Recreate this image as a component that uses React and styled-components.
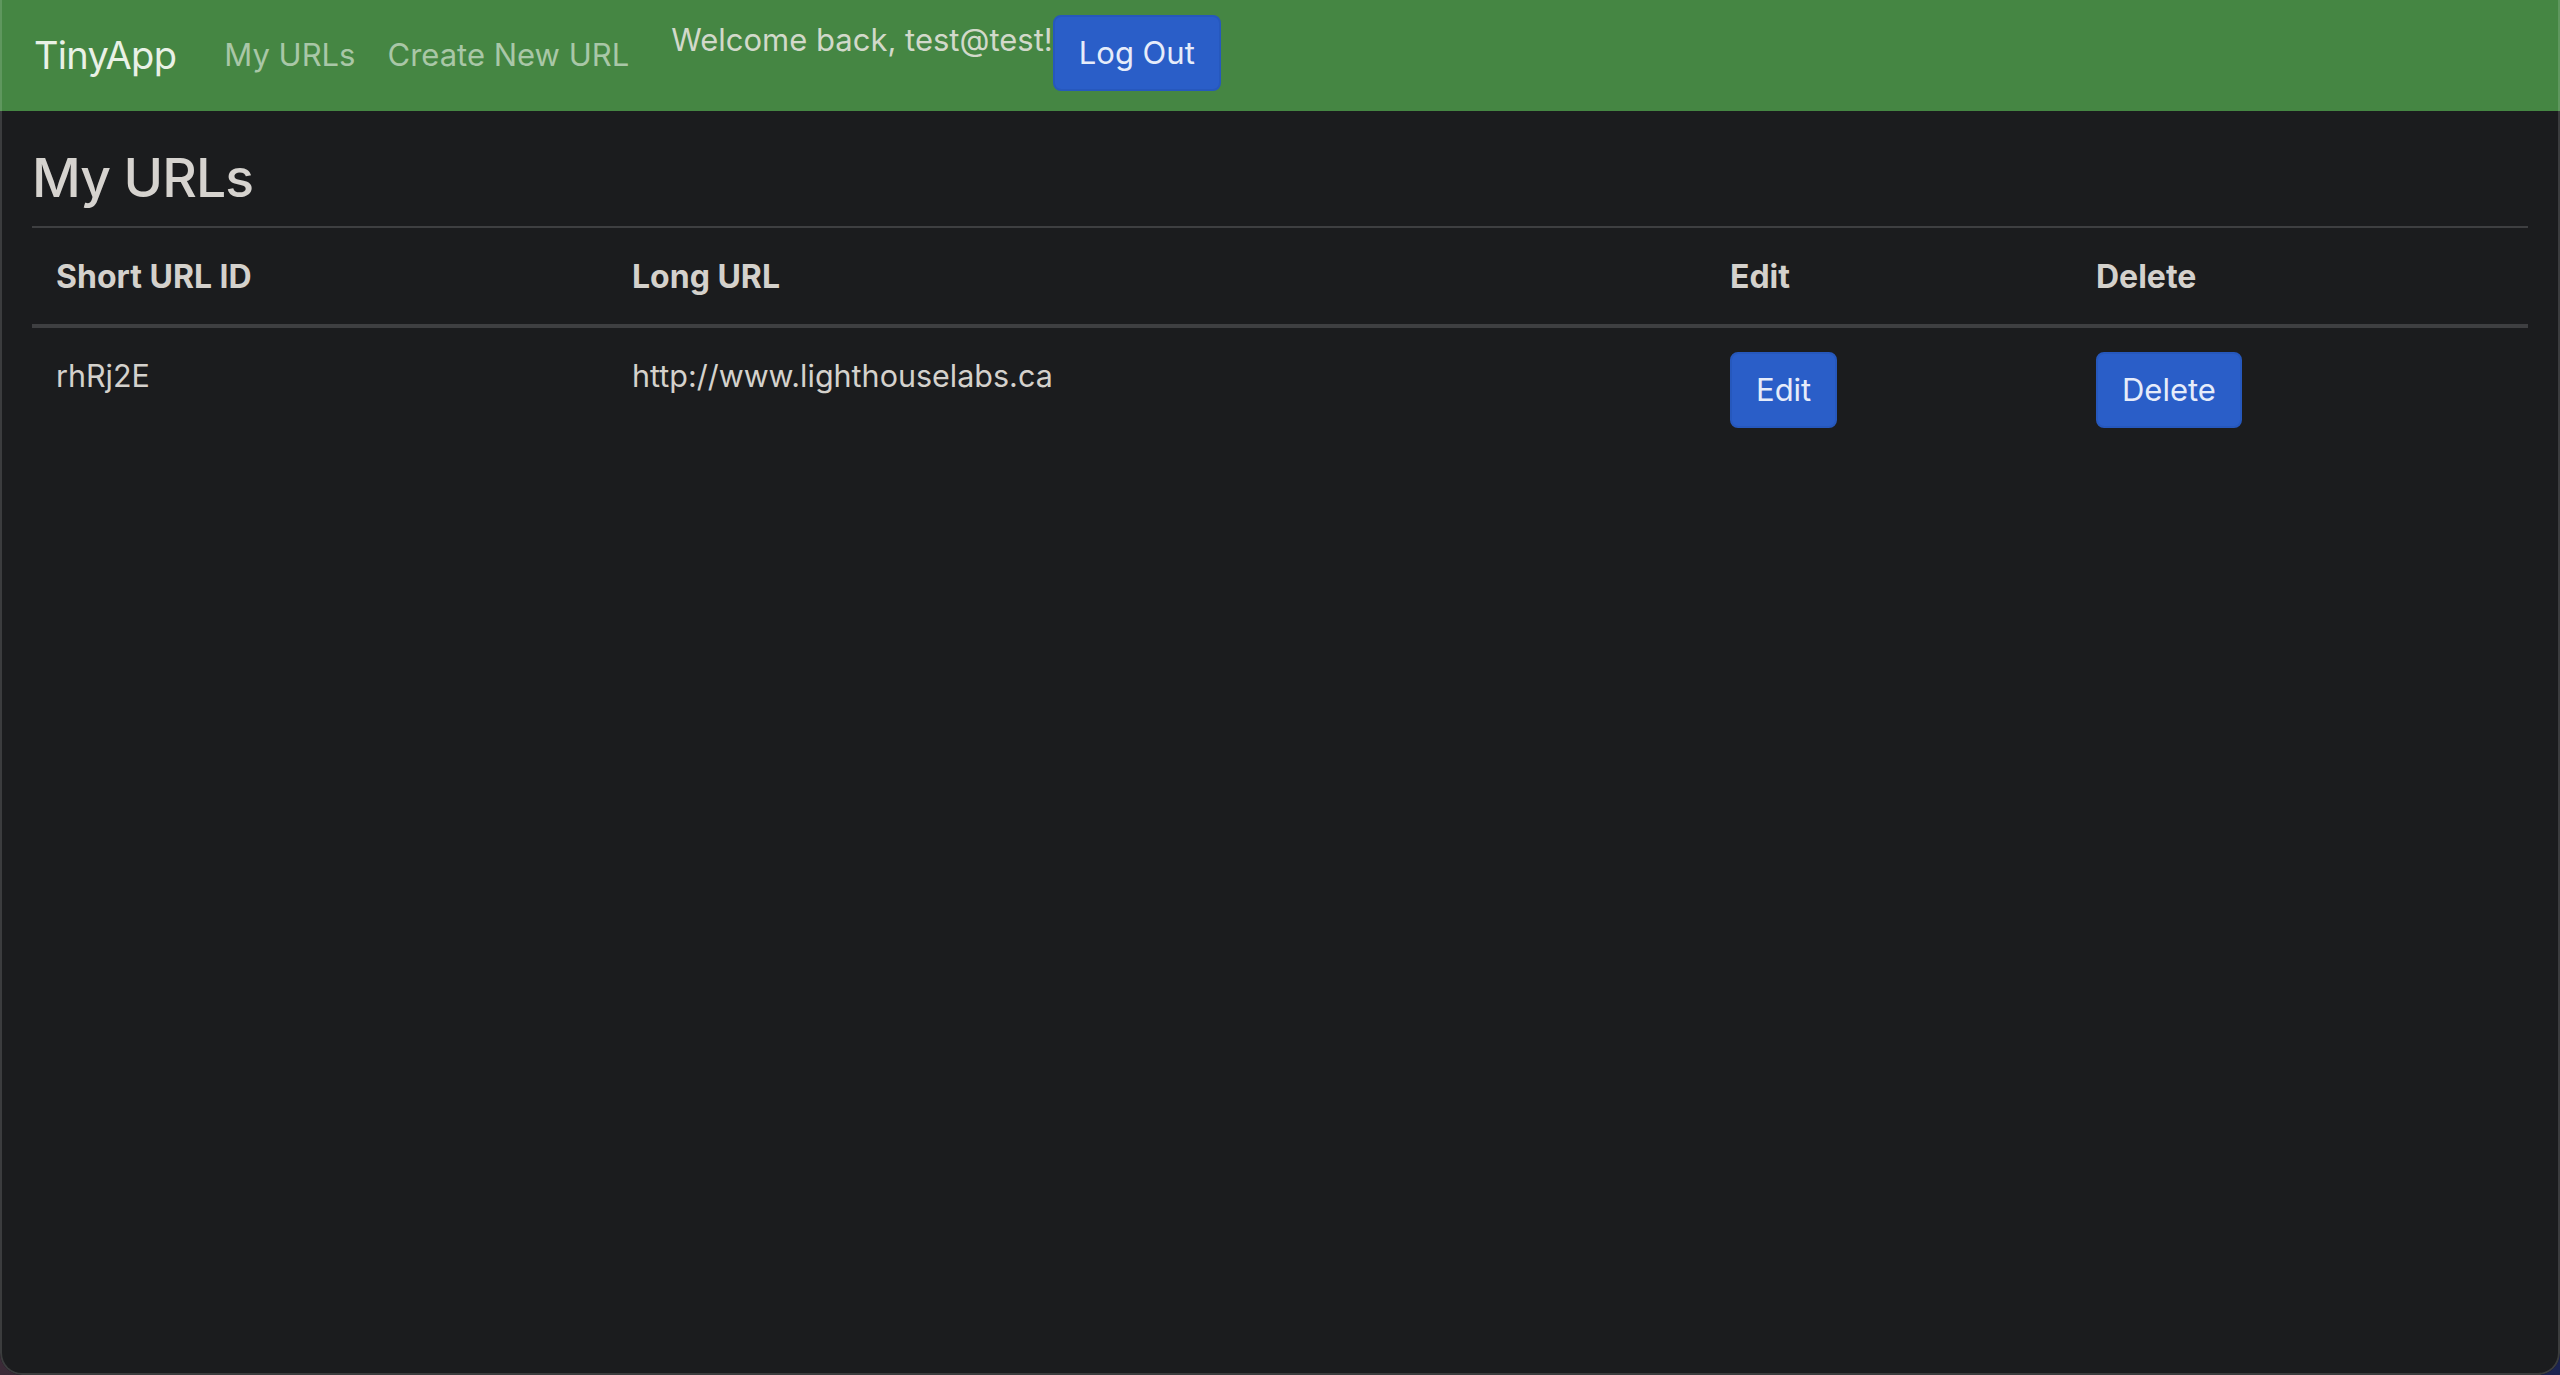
import React from 'react';
import styled, { createGlobalStyle } from 'styled-components';

const GlobalStyle = createGlobalStyle`
  html, body { margin: 0; padding: 0; }
  body {
    background: linear-gradient(90deg, #3b2a37 0%, #2a2540 50%, #1b2350 100%);
    font-family: Inter, "Noto Sans", sans-serif;
  }
  *, *::before, *::after { box-sizing: border-box; }
`;

const Window = styled.div`
  position: relative;
  width: 2560px;
  height: 1375px;
  background: #1b1c1e;
  border-radius: 0 0 22px 22px;
  overflow: hidden;
  display: flex;
  flex-direction: column;
  &::after {
    content: '';
    position: absolute;
    inset: 0;
    border: 2px solid rgba(255, 255, 255, 0.14);
    border-top: none;
    border-radius: 0 0 22px 22px;
    pointer-events: none;
  }
`;

const Navbar = styled.nav`
  flex: none;
  height: 111px;
  background: #458643;
  display: flex;
  align-items: center;
  padding: 0 34px;
`;

const Brand = styled.a`
  font-size: 38px;
  letter-spacing: -0.7px;
  line-height: 1.5;
  color: #e9f1e6;
  margin-right: 32px;
  text-decoration: none;
`;

const NavList = styled.div`
  display: flex;
  align-items: center;
`;

const NavLink = styled.a`
  padding: 0 16px;
  font-size: 31px;
  line-height: 1.5;
  color: #a9c7a7;
  text-decoration: none;
`;

const UserArea = styled.div`
  display: flex;
  align-items: flex-start;
  margin-left: 26px;
  margin-bottom: 5px;
`;

const Welcome = styled.span`
  font-size: 31px;
  line-height: 1.5;
  padding-top: 2px;
  color: #d2d9ca;
`;

const Button = styled.button`
  display: inline-flex;
  align-items: center;
  vertical-align: top;
  margin: 0;
  font-family: inherit;
  font-size: 31px;
  line-height: 48px;
  padding: 12px 24px;
  color: #e6ecfa;
  background: #2a5ec8;
  border: 2px solid #2658bd;
  border-radius: 8px;
  cursor: pointer;
`;

const Main = styled.main`
  padding: 0 32px;
`;

const Heading = styled.h3`
  margin: 35px 0 16px;
  font-size: 53.5px;
  letter-spacing: -0.9px;
  font-weight: 500;
  line-height: 1.2;
  color: #d6d3cf;
`;

const Table = styled.table`
  width: 100%;
  border-collapse: collapse;
  table-layout: fixed;
`;

const HeadCell = styled.th`
  padding: 25px 24px 23px;
  border-top: 2px solid #3e3f41;
  border-bottom: 4px solid #3e3f41;
  text-align: left;
  vertical-align: bottom;
  font-size: 32px;
  font-weight: 700;
  line-height: 48px;
  color: #d4d1cc;
`;

const Cell = styled.td`
  padding: 24px;
  vertical-align: top;
  font-size: 30.5px;
  line-height: 48px;
  color: #d4d1cc;
`;

const columns = [
  { label: 'Short URL ID', width: 576 },
  { label: 'Long URL', width: 1098 },
  { label: 'Edit', width: 366 },
  { label: 'Delete', width: 456 },
];

const urls = [{ id: 'rhRj2E', longURL: 'http://www.lighthouselabs.ca' }];

export default function App() {
  return (
    <>
      <GlobalStyle />
      <Window>
        <Navbar>
          <Brand href="#">TinyApp</Brand>
          <NavList>
            <NavLink href="#">My URLs</NavLink>
            <NavLink href="#">Create New URL</NavLink>
          </NavList>
          <UserArea>
            <Welcome>Welcome back, test@test!</Welcome>
            <Button>Log Out</Button>
          </UserArea>
        </Navbar>
        <Main>
          <Heading>My URLs</Heading>
          <Table>
            <colgroup>
              {columns.map((c) => (
                <col key={c.label} style={{ width: c.width }} />
              ))}
            </colgroup>
            <thead>
              <tr>
                {columns.map((c) => (
                  <HeadCell key={c.label}>{c.label}</HeadCell>
                ))}
              </tr>
            </thead>
            <tbody>
              {urls.map((u) => (
                <tr key={u.id}>
                  <Cell>{u.id}</Cell>
                  <Cell>{u.longURL}</Cell>
                  <Cell>
                    <Button>Edit</Button>
                  </Cell>
                  <Cell>
                    <Button>Delete</Button>
                  </Cell>
                </tr>
              ))}
            </tbody>
          </Table>
        </Main>
      </Window>
    </>
  );
}
